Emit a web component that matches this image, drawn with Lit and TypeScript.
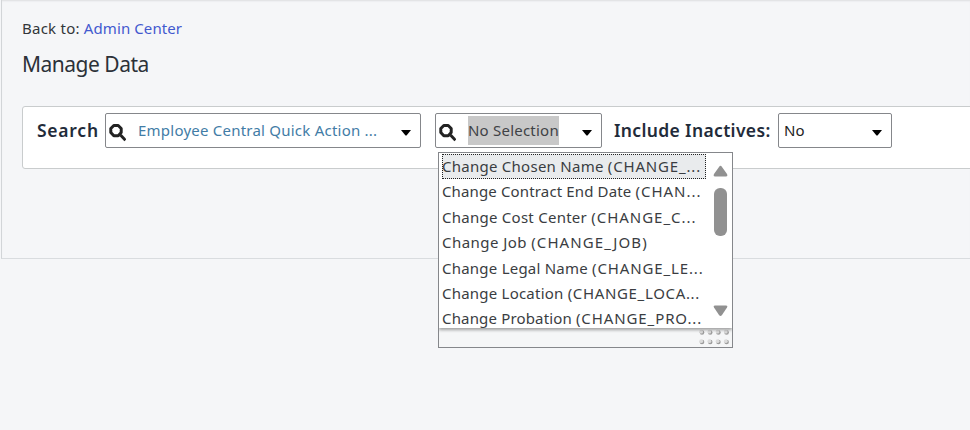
import { LitElement, html, css, svg } from "lit";
import { customElement, property } from "lit/decorators.js";

interface Option {
  name: string;
  code: string;
  nameSpacing: number;
  codeSpacing: number;
}

const OPTIONS: Option[] = [
  { name: "Change Chosen Name ", code: "(CHANGE_...", nameSpacing: 0.26, codeSpacing: 0.83 },
  { name: "Change Contract End Date ", code: "(CHAN...", nameSpacing: 0.14, codeSpacing: 0.98 },
  { name: "Change Cost Center ", code: "(CHANGE_C...", nameSpacing: 0.26, codeSpacing: 0.98 },
  { name: "Change Job ", code: "(CHANGE_JOB)", nameSpacing: 0.45, codeSpacing: 1.08 },
  { name: "Change Legal Name ", code: "(CHANGE_LE...", nameSpacing: 0.23, codeSpacing: 0.86 },
  { name: "Change Location ", code: "(CHANGE_LOCA...", nameSpacing: 0.22, codeSpacing: 0.66 },
  { name: "Change Probation ", code: "(CHANGE_PRO...", nameSpacing: 0.16, codeSpacing: 0.9 },
];

@customElement("option-list")
class OptionList extends LitElement {
  static styles = css`
    :host {
      display: block;
      box-sizing: border-box;
      width: 295px;
      height: 196px;
      border: 1px solid #85878b;
      background: #f5f6f7;
      font: 15px/25.8px "Noto Sans", sans-serif;
      letter-spacing: 0;
      color: #3a3d42;
    }
    .body {
      display: flex;
      height: 175px;
      overflow: hidden;
      background: #fff;
      box-shadow: 0 2px 3px rgba(0, 0, 0, 0.35);
      clip-path: inset(0 0 -5px 0);
    }
    .rows {
      flex: 1;
      padding: 1px 0 0 3px;
    }
    .row {
      box-sizing: border-box;
      width: 264px;
      height: 25.4px;
      white-space: pre;
    }
    .row.active {
      background: #e9ebed;
      outline: 1px dotted #222;
      outline-offset: -1px;
      line-height: 24px;
    }
    .bar {
      width: 25px;
      flex: none;
    }
    .foot {
      display: flex;
      justify-content: flex-end;
      padding: 1px 3px 0 0;
    }
    svg {
      display: block;
    }
  `;

  render() {
    return html`
      <div class="body">
        <div class="rows">
          ${OPTIONS.map(
            (o, i) => html`<div class="row ${i === 0 ? "active" : ""}"><span style="letter-spacing:${o.nameSpacing}px">${o.name}</span><span style="letter-spacing:${o.codeSpacing}px">${o.code}</span></div>`
          )}
        </div>
        <svg class="bar" width="25" height="175" viewBox="-1 0 25 175" fill="#919191">
          <path d="M11 14Q12.500 11.500 14 14L19 21Q20 23.500 18 23.500H7Q5 23.500 6 21Z" />
          <rect x="6" y="35" width="13" height="48" rx="6" />
          <path d="M7 152.500H18Q20 152.500 19 154.500L14 162Q12.500 164 11 162L6 154.500Q5 152.500 7 152.500Z" />
        </svg>
      </div>
      <div class="foot">
        <svg width="30" height="17" viewBox="0 0 30 17">
          ${[3.5, 13].map((y) =>
            [3, 11.2, 19.4, 27.6].map(
              (x) => svg`<circle cx=${x} cy=${y} r="2.3" fill="#9c9c9c" /><circle cx=${x - 0.8} cy=${y - 0.8} r="1.9" fill="#dcdcdc" />`
            )
          )}
        </svg>
      </div>
    `;
  }
}

@customElement("combo-field")
class ComboField extends LitElement {
  @property({ type: Boolean }) search = false;

  static styles = css`
    :host {
      display: flex;
      box-sizing: border-box;
      height: 35px;
      border: 1px solid #85878b;
      border-radius: 2px;
      background: #fff;
      align-items: center;
      position: relative;
      font: 15px/29px "Noto Sans", sans-serif;
    }
    .lens {
      width: 18px;
      height: 19px;
      margin: 3px 12px 0 2px;
      flex: none;
    }
    .arrow {
      width: 10px;
      height: 6px;
      margin: 5px 9px 0 auto;
      flex: none;
    }
    .value {
      white-space: nowrap;
    }
  `;

  render() {
    return html`
      ${this.search
        ? html`<svg class="lens" viewBox="0 0 18 19" fill="none" stroke="#222">
            <path d="M5.800 2.500H10.200L13.200 5.500V9.500L10.200 12.700H5.800L2.800 9.500V5.500Z" stroke-width="3" stroke-linejoin="round" />
            <path d="M12.500 12 17.500 17.300" stroke-width="3" />
          </svg>`
        : ""}
      <span class="value"><slot></slot></span>
      <svg class="arrow" viewBox="0 0 10 6"><path d="M0 0H10L5.500 5.500H4.500Z" fill="#000" /></svg>
    `;
  }
}

@customElement("app-root")
class AppRoot extends LitElement {
  static styles = css`
    :host {
      display: block;
      height: 430px;
      overflow: hidden;
      background: #f5f6f8;
      font: 15px/20px "Noto Sans", sans-serif;
      color: #32363a;
    }
    .page {
      box-sizing: border-box;
      height: 259px;
      margin-left: 1px;
      padding: 18px 0 0 20px;
      border-left: 1px solid #d2d5d8;
      border-bottom: 1px solid #d9dcdf;
      box-shadow: inset 0 2px 2px -1px #dcdee0;
    }
    .back {
      height: 20px;
      letter-spacing: 0.1px;
      white-space: nowrap;
    }
    .to {
      letter-spacing: 0.25px;
    }
    .link {
      color: #4259cf;
    }
    h1 {
      margin: 11px 0 0;
      height: 30px;
      font-size: 21px;
      line-height: 30px;
      font-weight: 400;
      letter-spacing: -0.5px;
      color: #2c3138;
    }
    .card {
      display: flex;
      box-sizing: border-box;
      width: 990px;
      height: 63px;
      margin-top: 27px;
      padding: 6px 0 0 14px;
      border: 1px solid #c9cccd;
      border-radius: 3px;
      background: #fff;
    }
    .label {
      flex: none;
      font-size: 17.5px;
      font-weight: 600;
      line-height: 35px;
      color: #222b3a;
      white-space: nowrap;
    }
    .label.search {
      width: 68px;
      letter-spacing: 0.75px;
    }
    .label.inactive {
      width: 164px;
      margin-left: 12px;
      letter-spacing: 0.35px;
    }
    .object {
      width: 316px;
      color: #427ca6;
      letter-spacing: 0.23px;
    }
    .pick {
      position: relative;
      margin-left: 14px;
    }
    .record {
      width: 167px;
      color: #3f4246;
    }
    .choice {
      width: 114px;
      color: #222;
    }
    .choice .text {
      margin-left: 5px;
    }
    .selected {
      display: inline-block;
      width: 91px;
      background: #c8c8c8;
      letter-spacing: 0.22px;
    }
    .menu {
      position: absolute;
      left: 3px;
      top: 39px;
      z-index: 2;
    }
  `;

  render() {
    return html`
      <div class="page">
        <div class="back"><span class="to">Back to:</span> <span class="link">Admin Center</span></div>
        <h1>Manage Data</h1>
        <div class="card">
          <span class="label search">Search</span>
          <combo-field class="object" search><span class="text">Employee Central Quick Action ...</span></combo-field>
          <div class="pick">
            <combo-field class="record" search><span class="selected">No Selection</span></combo-field>
            <option-list class="menu"></option-list>
          </div>
          <span class="label inactive">Include Inactives:</span>
          <combo-field class="choice"><span class="text">No</span></combo-field>
        </div>
      </div>
    `;
  }
}
